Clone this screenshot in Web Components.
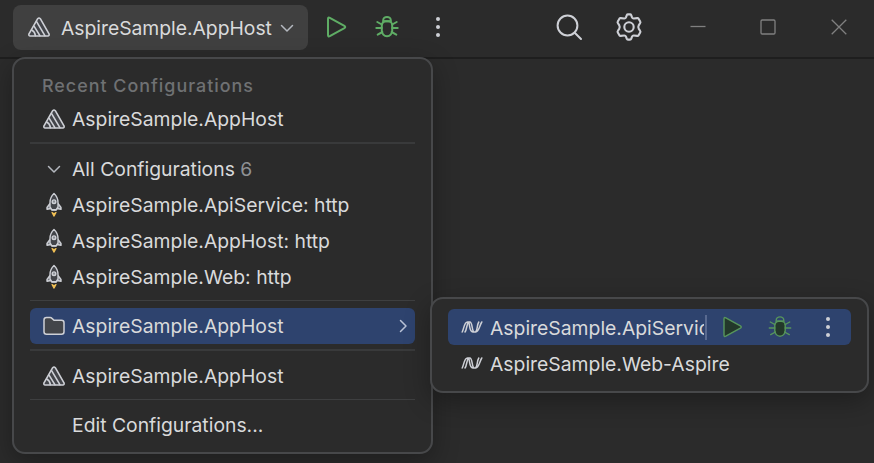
<!DOCTYPE html>
<html lang="en">
<head>
<meta charset="utf-8">
<title>Run configurations</title>
<style>
html,body{margin:0;width:874px;height:463px;overflow:hidden;background:#2b2b2b}
body{font-family:Inter,"Liberation Sans",sans-serif;font-size:19.350px;color:#d9dadb}
</style>
</head>
<body>
<ide-window></ide-window>
<script>
const BUG = f => `<svg width="24" height="24" viewBox="0 0 24 24" fill="none" stroke="currentColor" stroke-width="${f ? 1.4 : 2}" stroke-linecap="round">
<path d="M8.200 6.300V5.200a3.800 3.300 0 0 1 7.600 0V6.300z"/><path d="M6.800 10.300a4 4 0 0 1 4-4h2.400a4 4 0 0 1 4 4v5.500a5.200 5.400 0 0 1-10.400 0z" fill="${f ? '#23382a' : 'none'}"/>
<path d="M6.800 9.500L2.300 7M6.800 13H1.300M7.400 17L2.700 19.600M17.200 9.500l4.500-2.500M17.200 13h5.500M16.600 17l4.700 2.600"/></svg>`;
const PLAY = f => `<svg width="22" height="24" viewBox="0 0 22 24" fill="${f ? '#23382a' : 'none'}" stroke="currentColor" stroke-width="${f ? 1.4 : 2}" stroke-linejoin="round">
<path d="M2 3.900Q2 1.900 3.800 2.800L18.400 10.900Q20.100 12 18.400 13.100L3.800 21.200Q2 22.100 2 20.100Z"/></svg>`;
const ICONS = {
  aspire: `<svg width="22" height="20" viewBox="0 0 22 20" fill="none" stroke="#ced0d6" stroke-width="1.6" stroke-linejoin="round" stroke-linecap="round">
<path d="M9.700 1.700Q11 .200 12.300 1.700L21 16.800Q21.600 18.800 19.800 19H2.200Q.400 18.800 1 16.800Z" fill="#43454a"/><path d="M8.600 4.600L16.900 18.700M6.200 9.300L11.900 18.700M4 13.200Q6.800 14.500 7.400 18.700"/></svg>`,
  rocket: `<svg width="22" height="26" viewBox="0 0 22 26" fill="none" stroke="#ced0d6" stroke-width="1.400" stroke-linejoin="round">
<path d="M7 11.500L4 15.500V17.300L8 16.500L9 18H13L14 16.500L18 17.300V15.500L15 11.500" fill="#6f737a"/><path d="M11 1.500C8.300 4 7 7 7 10.500V15L8.800 17.700H13.200L15 15V10.500C15 7 13.700 4 11 1.500Z" fill="#43454a"/><circle cx="11" cy="9.700" r="1.800" fill="#8b8e94"/>
<path d="M9 20.500L11 24.100L13 20.500L11 21.700Z" fill="#f2c55c" stroke="#f0bf55" stroke-width="1.200"/></svg>`,
  folder: `<svg width="22" height="20" viewBox="0 0 22 20"><path d="M1 4Q1 1.500 3.500 1.500H7.300Q8.100 1.500 8.700 2.100L11 4.300H18.500Q21 4.300 21 6.800V15.800Q21 18.300 18.500 18.300H3.500Q1 18.300 1 15.800Z" fill="#43454a" stroke="#ced0d6" stroke-width="1.500"/></svg>`,
  wave: `<svg width="22" height="14" viewBox="0 0 22 14" fill="none" stroke="#ced0d6" stroke-width="1.500" stroke-linecap="round" stroke-linejoin="round">
<path d="M1.200 12C3 8.500 3.200 1.900 6.500 1.900H8.800C11.800 1.900 10.600 11.900 13.200 11.900H14.700C18 11.900 18.500 5.500 20.800 2M7.600 2C5.500 4 6 9.500 4 12M7.500 2C9.300 5 7.900 11.900 11.800 11.900H13.500M14.500 11.900C16.700 10.500 15.700 5 17.800 2"/></svg>`,
  down: `<svg width="14" height="9" viewBox="0 0 14 9" fill="none" stroke="#b4b8bf" stroke-width="1.500" stroke-linecap="round" stroke-linejoin="round"><path d="M1.500 1.500L7 7L12.500 1.500"/></svg>`,
  right: `<svg width="9" height="14" viewBox="0 0 9 14" fill="none" stroke="#b9c2d6" stroke-width="1.500" stroke-linecap="round" stroke-linejoin="round"><path d="M1.500 1.500L7 7L1.500 12.500"/></svg>`,
  play: PLAY(false), playfilled: PLAY(true), bug: BUG(false), bugfilled: BUG(true),
  dots: `<svg width="6" height="22" viewBox="0 0 6 22" fill="currentColor"><circle cx="3" cy="3" r="2"/><circle cx="3" cy="11" r="2"/><circle cx="3" cy="19" r="2"/></svg>`,
  search: `<svg width="28" height="28" viewBox="0 0 28 28" fill="none" stroke="#ced0d6" stroke-width="2" stroke-linecap="round"><circle cx="12.500" cy="12.500" r="9.900"/><path d="M19.700 19.700L26 26"/></svg>`,
  gear: `<svg width="28" height="28" viewBox="0 0 28 28" fill="none" stroke="#ced0d6" stroke-width="2.100" stroke-linejoin="round">
<path d="M11.800 2.200Q12.100 1.400 13 1.400H15Q15.900 1.400 16.200 2.200L17 4.400Q17.500 5.600 18.800 5.500L22.300 5.100Q23.100 5 23.600 5.700L25.200 8.500Q25.700 9.300 25.200 10L23.700 12.400Q22.800 14 23.700 15.600L25.200 18Q25.700 18.700 25.200 19.500L23.600 22.300Q23.100 23 22.300 22.900L18.800 22.500Q17.500 22.400 17 23.600L16.200 25.800Q15.900 26.600 15 26.600H13Q12.100 26.600 11.800 25.800L11 23.600Q10.500 22.400 9.200 22.500L5.700 22.900Q4.900 23 4.400 22.300L2.800 19.500Q2.300 18.700 2.800 18L4.300 15.600Q5.200 14 4.300 12.400L2.800 10Q2.300 9.300 2.800 8.500L4.400 5.700Q4.900 5 5.700 5.100L9.200 5.500Q10.500 5.600 11 4.400Z"/><circle cx="14" cy="14" r="4.700"/></svg>`,
  min: `<svg width="16" height="16" viewBox="0 0 16 16"><path d="M0.500 7.500H15.500" stroke="#808080" stroke-width="1.300"/></svg>`,
  max: `<svg width="16" height="16" viewBox="0 0 16 16"><rect x="1" y="1" width="14" height="14" rx="1.200" fill="none" stroke="#808080" stroke-width="1.300"/></svg>`,
  close: `<svg width="16" height="16" viewBox="0 0 16 16"><path d="M.7.700L15.300 15.300M15.300.700L.7 15.300" stroke="#808080" stroke-width="1.300"/></svg>`
};
const define = (name, html, setup) => customElements.define(name, class extends HTMLElement {
  constructor() {
    super();
    this.attachShadow({mode: 'open'}).innerHTML = html;
  }
  connectedCallback() { if (setup) setup(this, this.shadowRoot); }
});

define('ui-icon', `<style>:host{display:flex;flex:none;align-items:center;justify-content:center}svg{display:block}</style><span></span>`,
  (el, root) => { root.querySelector('span').innerHTML = ICONS[el.getAttribute('name')]; });

define('menu-separator', `<style>:host{display:block;height:14px;padding-top:5px;box-sizing:border-box}i{display:block;height:2px;background:#393a3b}
:host([thin]){height:13px}:host([thin]) i{height:1px;background:#3e3f40}</style><i></i>`);

define('menu-row', `<style>
:host{display:flex;align-items:center;height:36px;box-sizing:border-box;padding:0 7px 0 12px;border-radius:6px;white-space:nowrap}
:host([selected]){background:#2e436e}
.lead{display:flex;flex:none;justify-content:center;width:24px;margin-right:6px}
.label{flex:1;min-width:0;overflow:hidden;line-height:30px;padding-top:var(--label-drop,0)}
</style><span class="lead"><slot name="icon"></slot></span><span class="label"><slot></slot></span><slot name="end"></slot>`);

define('menu-popup', `<style>:host{display:block;box-sizing:border-box;border:2px solid #47484a;border-radius:13px;background:#2b2b2b;box-shadow:0 8px 26px rgba(0,0,0,.3)}</style><slot></slot>`);

define('row-actions', `<style>:host{display:flex;align-items:center;height:36px;flex:none;color:#57965c}
i{width:2px;height:25px;background:#596a90;margin:0 15px 0 1px}
.bug{margin-left:24px}.dots{margin-left:33px;margin-right:13px;color:#ced0d6}</style>
<i></i><ui-icon name="playfilled"></ui-icon><ui-icon class="bug" name="bugfilled"></ui-icon><ui-icon class="dots" name="dots"></ui-icon>`);

define('config-selector', `<style>:host{display:flex;align-items:center;box-sizing:border-box;width:295px;height:45px;padding:0 14px 0 15px;border-radius:8px;background:#404040;white-space:nowrap}
.name{margin-left:11px;flex:1;padding-top:2px;letter-spacing:-.03px}.chevron{padding-top:2px}</style><ui-icon name="aspire"></ui-icon><span class="name"><slot></slot></span><ui-icon class="chevron" name="down"></ui-icon>`);

define('title-bar', `<style>:host{display:flex;align-items:center;box-sizing:border-box;height:59px;padding:0 27px 3px 13px;border-bottom:2px solid #1e1e1e}
.run{margin-left:18px;color:#5fad65}.bug{margin-left:27px;color:#5fad65}.dots{margin-left:36px;color:#ced0d6}
.search{margin-left:auto}.gear{margin-left:32px}.min{margin-left:47px}.max{margin-left:54px}.close{margin-left:55px}
.min,.max,.close{padding-bottom:1px}</style>
<config-selector>AspireSample.AppHost</config-selector>
<ui-icon class="run" name="play"></ui-icon><ui-icon class="bug" name="bug"></ui-icon><ui-icon class="dots" name="dots"></ui-icon>
<ui-icon class="search" name="search"></ui-icon><ui-icon class="gear" name="gear"></ui-icon>
<ui-icon class="min" name="min"></ui-icon><ui-icon class="max" name="max"></ui-icon><ui-icon class="close" name="close"></ui-icon>`);

define('ide-window', `<style>
:host{display:block;position:relative;width:874px;height:463px;overflow:hidden;background:#2b2b2b}
.main{position:absolute;left:12px;top:57px;width:421px;height:397px;padding:8px 16px 0}
.sub{position:absolute;left:430px;top:297px;width:439px;height:96px;padding:10px 16px 0 16px;--label-drop:2px}
.heading{height:34px;line-height:38px;padding-left:12px;font-size:17.900px;font-weight:500;letter-spacing:1px;color:#6f7173}
.count{color:#8f9194}
</style>
<title-bar></title-bar>
<menu-popup class="main">
<div class="heading">Recent Configurations</div>
<menu-row><ui-icon slot="icon" name="aspire"></ui-icon>AspireSample.AppHost</menu-row>
<menu-separator></menu-separator>
<menu-row><ui-icon slot="icon" name="down"></ui-icon>All Configurations <span class="count">6</span></menu-row>
<menu-row><ui-icon slot="icon" name="rocket"></ui-icon>AspireSample.ApiService: http</menu-row>
<menu-row><ui-icon slot="icon" name="rocket"></ui-icon>AspireSample.AppHost: http</menu-row>
<menu-row><ui-icon slot="icon" name="rocket"></ui-icon>AspireSample.Web: http</menu-row>
<menu-separator thin></menu-separator>
<menu-row selected><ui-icon slot="icon" name="folder"></ui-icon>AspireSample.AppHost<ui-icon slot="end" name="right"></ui-icon></menu-row>
<menu-separator></menu-separator>
<menu-row><ui-icon slot="icon" name="aspire"></ui-icon>AspireSample.AppHost</menu-row>
<menu-separator thin></menu-separator>
<menu-row>Edit Configurations...</menu-row>
</menu-popup>
<menu-popup class="sub">
<menu-row selected><ui-icon slot="icon" name="wave"></ui-icon>AspireSample.ApiService-Aspire<row-actions slot="end"></row-actions></menu-row>
<menu-row><ui-icon slot="icon" name="wave"></ui-icon>AspireSample.Web-Aspire</menu-row>
</menu-popup>`);
</script>
</body>
</html>
